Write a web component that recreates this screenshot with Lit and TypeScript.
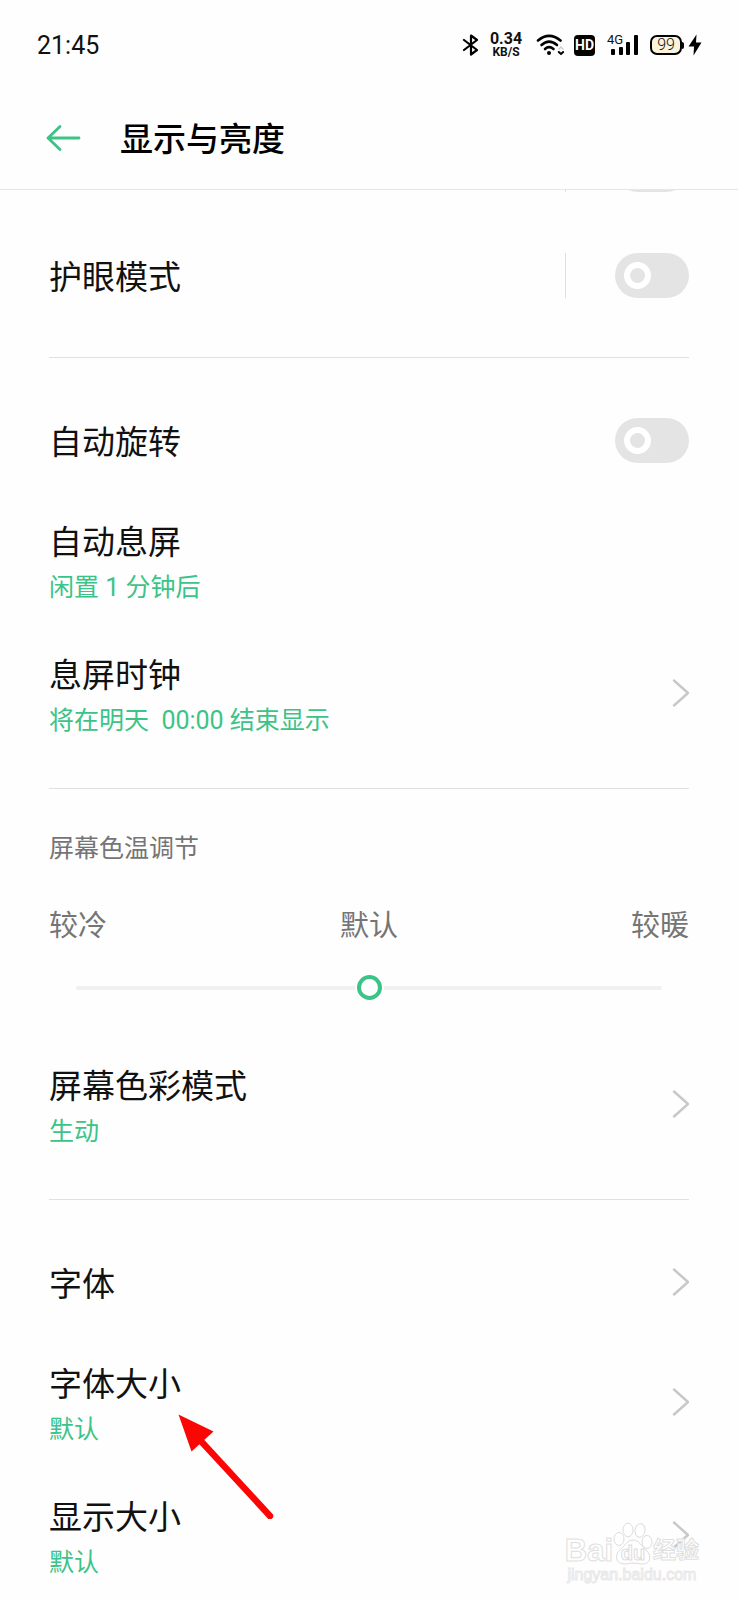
import { LitElement, html, css, nothing } from "lit";
import { customElement, property } from "lit/decorators.js";

const FONT = css`Roboto, "Noto Sans CJK SC", sans-serif`;

@customElement("status-bar")
class StatusBar extends LitElement {
  static styles = css`
    :host {
      display: flex;
      align-items: center;
      justify-content: space-between;
      height: 90px;
      padding: 0 36px 0 37px;
      font-family: ${FONT};
      color: #111;
    }
    .time {
      padding-top: 2px;
      font-size: 25px;
      line-height: 30px;
    }
    .icons {
      display: flex;
      align-items: center;
    }
    svg {
      display: block;
    }
    .speed {
      display: flex;
      flex-direction: column;
      align-items: center;
      width: 36px;
      margin: 0 12px 0 8px;
      font-weight: 700;
      font-size: 12px;
      line-height: 13px;
    }
    .speed-value {
      font-size: 16px;
      line-height: 14px;
    }
    .hd {
      margin: 0 12px 0 10px;
      width: 21px;
      height: 21px;
      border-radius: 4px;
      background: #000;
      color: #fff;
      font-size: 14px;
      line-height: 21px;
      font-weight: 700;
      text-align: center;
    }
    .signal {
      display: grid;
    }
    .signal > * {
      grid-area: 1 / 1;
    }
    .net {
      font-size: 13px;
      line-height: 12px;
      font-weight: 400;
    }
    .battery {
      display: flex;
      align-items: center;
      margin: 0 4px 0 12px;
    }
    .cell {
      box-sizing: border-box;
      width: 32px;
      height: 20px;
      border: 2px solid #000;
      border-radius: 7px;
      background: #fbf3dc;
      font-size: 16px;
      line-height: 16px;
      font-weight: 300;
      text-align: center;
    }
    .cap {
      width: 2px;
      height: 7px;
      border-radius: 0 2px 2px 0;
      background: #000;
    }
  `;

  render() {
    return html`
      <span class="time">21:45</span>
      <div class="icons">
        <svg width="18" height="22" viewBox="0 0 18 22" fill="none" stroke="#000" stroke-width="2.2" stroke-linejoin="round" stroke-linecap="round">
          <path d="M2 6 L15 16 L9 20.5 V1.5 L15 6 L2 16" />
        </svg>
        <div class="speed"><span class="speed-value">0.34</span><span>KB/S</span></div>
        <svg width="28" height="22" viewBox="0 0 28 22" fill="none" stroke="#000" stroke-width="2.6" stroke-linecap="round">
          <path d="M2 6.5 Q13 -2.8 24.5 6.5" />
          <path d="M5.5 11 Q13 4.2 21 11" />
          <path d="M9 15 Q13 11.4 17.5 15" />
          <circle cx="13" cy="19" r="2" fill="#000" stroke="none" />
          <path d="M23 15 L25 13 L27 15" stroke="#ccc" stroke-width="1.4" />
          <path d="M22.8 18 L25 20 L27.2 18" stroke-width="2" />
        </svg>
        <div class="hd">HD</div>
        <div class="signal">
          <svg width="31" height="22" viewBox="0 0 31 22">
            <rect x="4" y="15" width="4" height="6" rx="1" />
            <rect x="12" y="13" width="4" height="8" rx="1" />
            <rect x="19" y="8" width="4" height="13" rx="1" />
            <rect x="27" y="1" width="4" height="20" rx="1" />
          </svg>
          <span class="net">4G</span>
        </div>
        <div class="battery"><span class="cell">99</span><span class="cap"></span></div>
        <svg width="14" height="22" viewBox="0 0 14 22"><path d="M8.5 0.5 L0.5 12.5 H6 L5.5 21.5 L13.5 8.5 H8 Z" /></svg>
      </div>
    `;
  }
}

@customElement("setting-row")
class SettingRow extends LitElement {
  @property() heading = "";
  @property() note = "";
  @property() control: "switch" | "link" | "" = "";
  @property({ type: Boolean }) split = false;

  static styles = css`
    :host {
      display: block;
      position: relative;
      font-family: ${FONT};
      color: #111;
    }
    .row {
      display: flex;
      align-items: center;
      box-sizing: border-box;
      min-height: 106px;
      width: 100%;
      color: inherit;
      text-decoration: none;
    }
    .tall {
      min-height: 133px;
    }
    .text {
      display: flex;
      flex: 1;
      flex-direction: column;
      gap: 5px;
      padding-top: 6px;
    }
    .heading {
      font-size: 33px;
      line-height: 46px;
    }
    .note {
      font-size: 25px;
      line-height: 34px;
      color: #3cc387;
      white-space: pre-wrap;
    }
    .bar {
      width: 1px;
      height: 45px;
      margin-right: 49px;
      background: #dedede;
    }
    .switch {
      appearance: none;
      display: flex;
      align-items: center;
      box-sizing: border-box;
      width: 74px;
      height: 45px;
      margin: 0;
      padding: 0 9px;
      border-radius: 23px;
      background: #e4e4e4;
    }
    .switch::before {
      content: "";
      box-sizing: border-box;
      width: 27px;
      height: 27px;
      border: 6px solid #fff;
      border-radius: 50%;
    }
    .switch:checked {
      justify-content: flex-end;
      background: #3cc387;
    }
  `;

  render() {
    const text = html`
      <span class="text">
        ${this.heading ? html`<span class="heading">${this.heading}</span>` : nothing}
        ${this.note ? html`<span class="note">${this.note}</span>` : nothing}
      </span>
    `;
    const size = this.note ? "row tall" : "row";
    if (this.control === "switch") {
      return html`<label class=${size}>
        ${text}${this.split ? html`<span class="bar"></span>` : nothing}
        <input class="switch" type="checkbox" role="switch" aria-label=${this.heading || "开关"} />
      </label>`;
    }
    return html`<a class=${size} href="#">
        ${text}
        ${this.control === "link"
          ? html`<svg width="17" height="30" viewBox="0 0 17 30" fill="none" stroke="#c8c8c8" stroke-width="2.4" stroke-linejoin="round" stroke-linecap="round">
              <path d="M2 2.5 L16 15 L2 27.5" />
            </svg>`
          : nothing}
      </a>
      <slot></slot>`;
  }
}

@customElement("app-root")
class AppRoot extends LitElement {
  static styles = css`
    :host {
      display: flex;
      flex-direction: column;
      position: relative;
      height: 100vh;
      overflow: hidden;
      background: #fefefe;
      font-family: ${FONT};
      color: #111;
    }
    .bar {
      display: flex;
      align-items: center;
      gap: 39px;
      box-sizing: border-box;
      height: 100px;
      padding: 0 46px 4px;
      border-bottom: 1px solid #e6e6e6;
    }
    .back {
      display: block;
      padding: 0;
      border: 0;
      background: none;
    }
    .back svg {
      display: block;
    }
    .title {
      margin: 0;
      padding-top: 4px;
      font-size: 33px;
      line-height: 46px;
      font-weight: 500;
      color: #000;
    }
    .view {
      flex: 1;
      min-height: 0;
      overflow: hidden;
    }
    .list {
      margin-top: -74px;
      padding: 0 49px;
    }
    .rule {
      height: 1px;
      margin: 29px 0;
      border: 0;
      background: #e0e0e0;
    }
    .label {
      display: block;
      padding-top: 14px;
      font-size: 25px;
      line-height: 34px;
      color: #757575;
    }
    .scale {
      display: flex;
      justify-content: space-between;
      margin-top: 40px;
      font-size: 29px;
      line-height: 40px;
      color: #757575;
    }
    .slide {
      display: flex;
      margin: 23px 27px 31px;
    }
    .range {
      appearance: none;
      width: 100%;
      height: 37px;
      margin: 0;
      background: none;
    }
    .range::-webkit-slider-runnable-track {
      height: 4px;
      border-radius: 2px;
      background: #f0f0f0;
    }
    .range::-webkit-slider-thumb {
      appearance: none;
      box-sizing: border-box;
      width: 25px;
      height: 25px;
      margin-top: -11px;
      border: 4px solid #3cc387;
      border-radius: 50%;
      background: #fff;
      box-shadow: 0 0 0 2px #fefefe;
    }
    .arrow {
      position: absolute;
      left: 128px;
      top: 78px;
    }
    .mark {
      position: absolute;
      right: 39px;
      bottom: 16px;
      display: flex;
      flex-direction: column;
      align-items: center;
      color: #fff;
      font-weight: 700;
      pointer-events: none;
      -webkit-text-stroke: 1px #e0e0e0;
    }
    .brand {
      display: flex;
      align-items: flex-end;
      font-family: "Liberation Sans", "Noto Sans CJK SC", sans-serif;
      font-size: 31px;
      line-height: 30px;
    }
    .cn {
      font-size: 23px;
      line-height: 31px;
    }
    .du {
      color: #fff;
      font-size: 20px;
    }
    .site {
      font-family: "Liberation Sans", sans-serif;
      font-size: 16px;
      line-height: 18px;
      font-weight: 400;
      -webkit-text-stroke: 1px #e8e8e8;
    }
  `;

  render() {
    return html`
      <status-bar></status-bar>
      <header class="bar">
        <button class="back" aria-label="返回">
          <svg width="35" height="28" viewBox="0 0 35 28" fill="none" stroke="#3cc387" stroke-width="2.8" stroke-linecap="round" stroke-linejoin="round">
            <path d="M14 2.5 L2 14 L14 25.5 M2 14 H33" />
          </svg>
        </button>
        <h1 class="title">显示与亮度</h1>
      </header>
      <main class="view">
        <div class="list">
          <setting-row control="switch" split></setting-row>
          <setting-row heading="护眼模式" control="switch" split></setting-row>
          <hr class="rule" />
          <setting-row heading="自动旋转" control="switch"></setting-row>
          <setting-row heading="自动息屏" note="闲置 1 分钟后"></setting-row>
          <setting-row heading="息屏时钟" note="将在明天  00:00 结束显示" control="link"></setting-row>
          <hr class="rule" />
          <label class="label" for="temperature">屏幕色温调节</label>
          <div class="scale"><span>较冷</span><span>默认</span><span>较暖</span></div>
          <div class="slide"><input class="range" id="temperature" type="range" min="0" max="100" value="50" /></div>
          <setting-row heading="屏幕色彩模式" note="生动" control="link"></setting-row>
          <hr class="rule" />
          <setting-row heading="字体" control="link"></setting-row>
          <setting-row heading="字体大小" note="默认" control="link">
            <svg class="arrow" width="98" height="106" viewBox="0 0 98 106">
              <path d="M22 26 L93 103" stroke="#fb0505" stroke-width="6.5" stroke-linecap="round" />
              <path d="M1.5 1.5 L36.5 18.5 L14.5 38.5 Z" fill="#fb0505" />
            </svg>
          </setting-row>
          <setting-row heading="显示大小" note="默认" control="link"></setting-row>
        </div>
      </main>
      <div class="mark">
        <div class="brand">
          <span>Bai</span>
          <svg width="40" height="44" viewBox="0 0 40 44" fill="#fff" stroke="#dcdcdc">
            <ellipse cx="6" cy="17" rx="5" ry="6.5" />
            <ellipse cx="15" cy="8" rx="5" ry="6.8" />
            <ellipse cx="27" cy="8.5" rx="5" ry="6.8" transform="rotate(8 27 8.5)" />
            <ellipse cx="34" cy="20" rx="5" ry="6.5" />
            <path d="M20 18 C14 18 12 24 7 28 C1 33 3 42 11 42 C15 42 17 41 20 41 C24 41 26 42 30 42 C37 42 39 34 34 29 C29 25 26 18 20 18 Z" />
            <text class="du" x="20" y="38" text-anchor="middle">du</text>
          </svg>
          <span class="cn">经验</span>
        </div>
        <span class="site">jingyan.baidu.com</span>
      </div>
    `;
  }
}
